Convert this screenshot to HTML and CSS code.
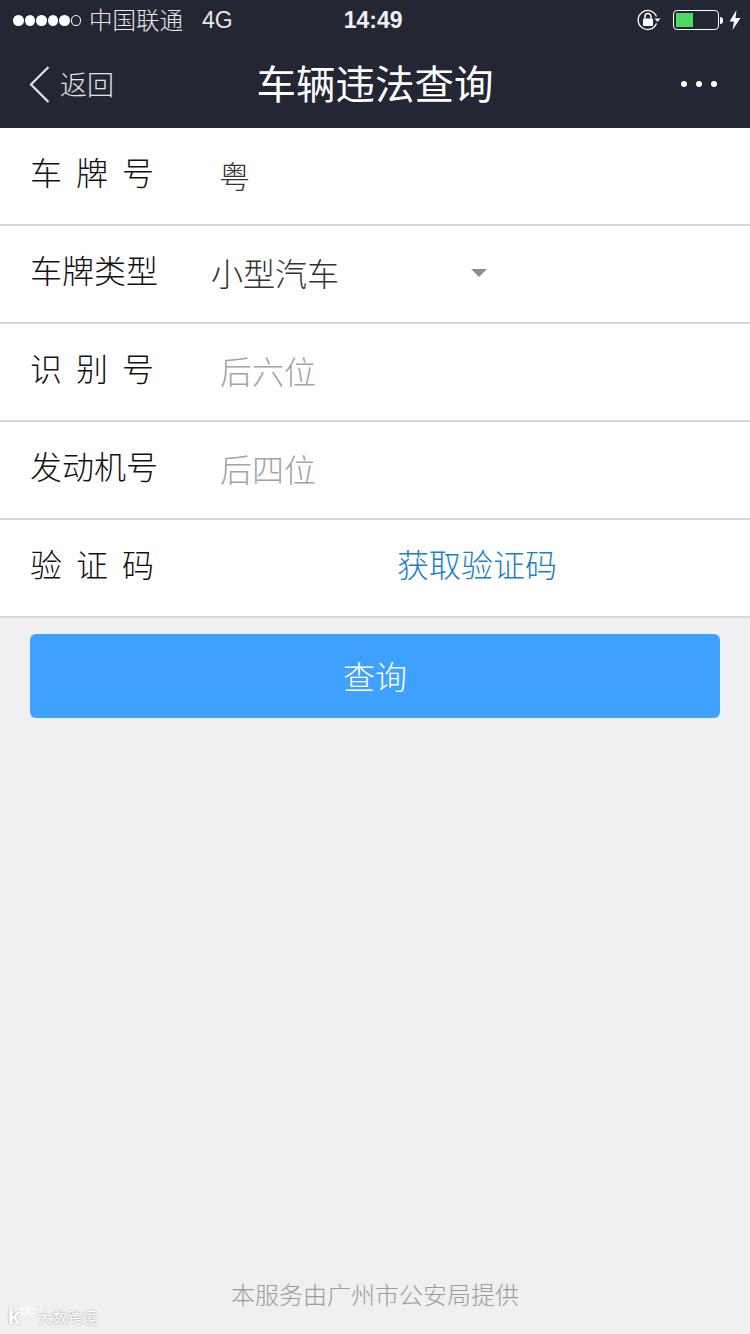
FILE: index.html
```html
<!DOCTYPE html>
<html lang="zh-CN">
<head>
    <meta charset="UTF-8">
    <meta name="viewport" content="width=device-width, initial-scale=1.0">
    <title>车辆违法查询</title>
    <link rel="stylesheet" href="styles.css">
</head>
<body>
    <div class="page">
        <header class="top">
            <div class="status">
                <div class="signal">
                    <i class="dot"></i><i class="dot"></i><i class="dot"></i><i class="dot"></i><i class="dot"></i><i class="dot empty"></i>
                </div>
                <span class="carrier">中国联通</span>
                <span class="net">4G</span>
                <span class="time">14:49</span>
                <div class="status-right">
                    <svg class="lock" width="24" height="22" viewBox="0 0 24 22">
                        <path d="M19.5 7.5A9.5 9.5 0 1 0 19.5 14.5" fill="none" stroke="#fff" stroke-width="1.3"/>
                        <path d="M17.5 9.5h6l-3 3.4z" fill="#fff"/>
                        <rect x="6" y="9.5" width="10" height="7.5" rx="1" fill="#fff"/>
                        <path d="M8 9.5V7.6a3 3 0 0 1 6 0v1.9" fill="none" stroke="#fff" stroke-width="1.5"/>
                    </svg>
                    <div class="battery"><div class="battery-level"></div></div>
                    <div class="battery-nub"></div>
                    <svg class="bolt" width="12" height="20" viewBox="0 0 12 20">
                        <path d="M7.5 0L0.5 11.5H5L3.5 20L11.5 8H6.5z" fill="#fff"/>
                    </svg>
                </div>
            </div>
            <nav class="nav">
                <div class="back">
                    <svg width="21" height="37" viewBox="0 0 21 37">
                        <path d="M19.5 1L2 18.5L19.5 36" fill="none" stroke="#e4e4e6" stroke-width="2.2"/>
                    </svg>
                    <span>返回</span>
                </div>
                <h1 class="title">车辆违法查询</h1>
                <div class="more"><i></i><i></i><i></i></div>
            </nav>
        </header>

        <form class="form">
            <div class="row">
                <label class="label spaced">车牌号</label>
                <span class="value plate">粤</span>
            </div>
            <div class="row">
                <label class="label">车牌类型</label>
                <span class="value select">小型汽车</span>
                <span class="arrow"></span>
            </div>
            <div class="row">
                <label class="label spaced">识别号</label>
                <span class="value hint">后六位</span>
            </div>
            <div class="row">
                <label class="label">发动机号</label>
                <span class="value hint">后四位</span>
            </div>
            <div class="row">
                <label class="label spaced">验证码</label>
                <a class="get-code">获取验证码</a>
            </div>
        </form>

        <button class="query-btn" type="button">查询</button>

        <footer class="foot">本服务由广州市公安局提供</footer>

        <div class="watermark">
            <span class="wm-k">k</span>
            <svg width="17" height="10" viewBox="0 0 17 10">
                <circle cx="5" cy="5" r="3.2" fill="none" stroke="#fff" stroke-width="1.2"/>
                <circle cx="12" cy="5" r="3.2" fill="none" stroke="#fff" stroke-width="1.2"/>
            </svg>
            <span class="wm-text">大数跨境</span>
        </div>
    </div>
</body>
</html>
```

FILE: styles.css
```css
* {
    box-sizing: border-box;
}

body {
    margin: 0;
    font-family: "Noto Sans CJK SC", "Noto Sans", sans-serif;
    background-color: #f0eff2;
}

.page {
    position: relative;
    display: flex;
    flex-direction: column;
    width: 750px;
    height: 1334px;
    overflow: hidden;
}

/* header */
.top {
    height: 128px;
    background-color: #232633;
    color: #fff;
}

.status {
    position: relative;
    display: flex;
    align-items: center;
    height: 40px;
    padding-left: 13px;
}

.signal {
    display: flex;
    gap: 1px;
}

.dot {
    width: 10.5px;
    height: 11px;
    border-radius: 50%;
    background-color: #fff;
}

.dot.empty {
    background: none;
    border: 1px solid #fff;
}

.carrier {
    margin: -2px 0 0 8px;
    font-size: 23.5px;
    font-weight: 300;
    color: #e8e8ea;
}

.net {
    margin-left: 19px;
    font-family: "Liberation Sans", sans-serif;
    font-size: 23px;
    color: #e8e8ea;
}

.time {
    margin-left: 111px;
    font-family: "Liberation Sans", sans-serif;
    font-size: 23px;
    font-weight: 700;
    color: #f0f0f2;
}

.status-right {
    position: absolute;
    top: 0;
    right: 9px;
    display: flex;
    align-items: center;
    height: 40px;
}

.lock {
    margin-right: 12px;
}

.battery {
    width: 46px;
    height: 20px;
    padding: 2px;
    border: 1px solid #fff;
    border-radius: 4px;
}

.battery-level {
    width: 17px;
    height: 100%;
    background-color: #4cd964;
}

.battery-nub {
    width: 3px;
    height: 7px;
    margin-left: 1px;
    border-radius: 0 3px 3px 0;
    background-color: #fff;
}

.bolt {
    margin-left: 6px;
}

.nav {
    display: flex;
    align-items: center;
    justify-content: space-between;
    position: relative;
    height: 88px;
    padding: 0 33px 0 29px;
}

.back {
    display: flex;
    align-items: center;
    gap: 10px;
    font-size: 27px;
    font-weight: 300;
    color: #e4e4e6;
}

.back span {
    margin-top: -2px;
}

.title {
    position: absolute;
    left: 0;
    right: 0;
    top: -2px;
    margin: 0;
    text-align: center;
    font-size: 39.5px;
    font-weight: 400;
    line-height: 88px;
}

.more {
    display: flex;
    gap: 9px;
}

.more i {
    width: 6px;
    height: 6px;
    border-radius: 50%;
    background-color: #fff;
}

/* form rows */
.form {
    background-color: #fff;
}

.row {
    display: flex;
    align-items: center;
    height: 98px;
    padding-left: 30px;
    border-bottom: 2px solid #d8d6da;
}

.label {
    width: 182px;
    padding-bottom: 10px;
    font-size: 32px;
    font-weight: 300;
    color: #111;
    white-space: nowrap;
}

.label.spaced {
    letter-spacing: 14px;
}

.value {
    padding-bottom: 4px;
    font-size: 32px;
    font-weight: 300;
    color: #333;
}

.select {
    margin-left: -1px;
}

.plate {
    margin-left: 7px;
    font-size: 31px;
}

.hint {
    margin-left: 8px;
    color: #a3a3a8;
}

.arrow {
    width: 0;
    height: 0;
    margin: -3px 0 0 132px;
    border-top: 8px solid #8d8d8d;
    border-left: 8px solid transparent;
    border-right: 8px solid transparent;
}

.get-code {
    margin-left: 185px;
    padding-bottom: 10px;
    font-size: 32px;
    font-weight: 300;
    color: #1a80c9;
}

.query-btn {
    height: 84px;
    margin: 16px 30px 0;
    padding-bottom: 4px;
    border: 0;
    border-radius: 6px;
    background-color: #3fa1ff;
    color: #fff;
    font-family: inherit;
    font-size: 32px;
    font-weight: 300;
}

.foot {
    margin-top: auto;
    padding-bottom: 23px;
    text-align: center;
    font-size: 24px;
    font-weight: 300;
    color: #9b9b9f;
}

/* image watermark, sits on top of the page */
.watermark {
    position: absolute;
    left: 8px;
    bottom: 6px;
    display: flex;
    align-items: center;
    color: #fff;
    text-shadow: 0 0 2px #8f8f93;
}

.wm-k {
    font-family: "Liberation Sans", sans-serif;
    font-size: 22px;
    font-weight: 700;
    line-height: 22px;
}

.watermark svg {
    margin: -12px 0 0 -1px;
}

.wm-text {
    margin-left: 1px;
    font-size: 15px;
    line-height: 18px;
}
```
